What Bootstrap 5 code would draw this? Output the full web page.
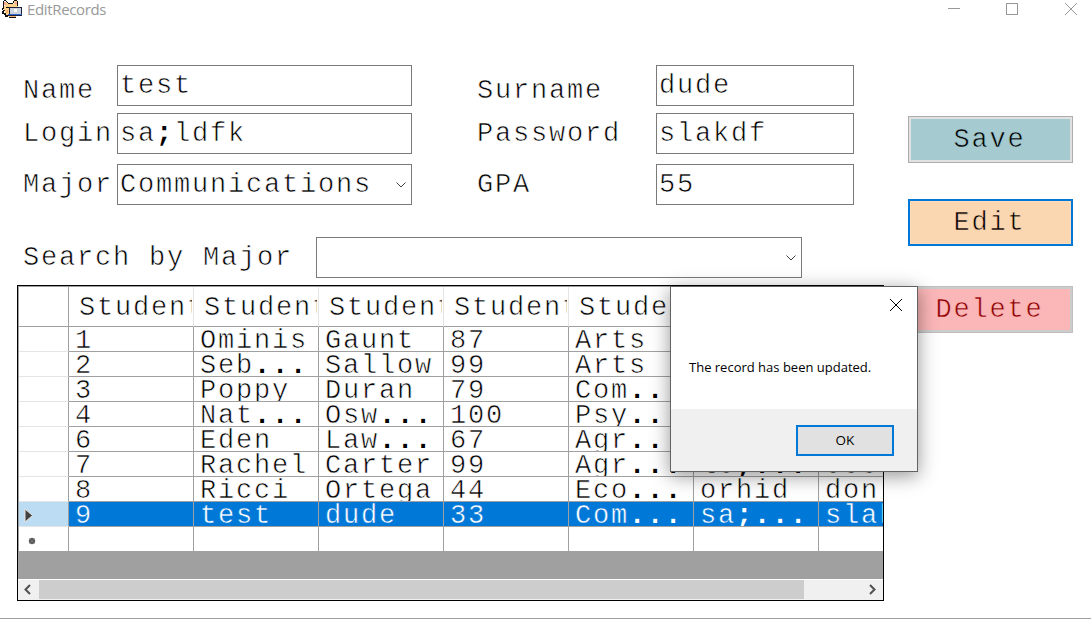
<!DOCTYPE html>
<html lang="en">
<head>
<meta charset="utf-8">
<title>EditRecords</title>
<link href="https://cdn.jsdelivr.net/npm/bootstrap@5.3.0/dist/css/bootstrap.min.css" rel="stylesheet">
<style>
body{width:1091px;height:619px;overflow:hidden;background:#fff;color:#000;font-family:"Liberation Mono",monospace;font-size:27px;letter-spacing:1.8px;line-height:39px;border-bottom:1px solid #a0a0a0}
.workspace{-webkit-text-stroke:.6px #fff}
.workspace b{-webkit-text-stroke:0}
.titlebar{height:20px;font:15px/19px "Open Sans","Noto Sans",sans-serif;letter-spacing:-.35px;color:#999}
.titlebar svg{display:block}
.workspace{padding:45px 18px 0 17px;gap:24px}
.main-col{width:867px}
.fields{display:grid;grid-template-columns:94px 295px 65px 179px 198px;padding-left:6px;grid-template-rows:41px 41px 41px;row-gap:7px}
.fields .third{position:relative;top:3px}
.field{height:41px;border:1px solid #7a7a7a;padding:0 0 0 2px;background:#fff;line-height:41px;white-space:nowrap}
.pick span{padding-top:1px}
.lbl{padding-top:1px;line-height:41px;white-space:nowrap}
.low{padding-top:6px}
.search-row{height:41px;margin-top:35px;padding-left:6px}
.search-row .lbl{width:293px}
.search-row .field{width:486px}
.records{width:867px;height:316px;margin-top:7px;border:1px solid #000;background:#a0a0a0;overflow:hidden}
.records table{table-layout:fixed;width:926px;border-collapse:separate;border-spacing:0;border-top:1px solid #a0a0a0;border-left:1px solid #a0a0a0;background:#fff}
.records td,.records th{padding:0 0 0 6px;height:25px;border-right:1px solid #a0a0a0;border-bottom:1px solid #a0a0a0;font-weight:400;overflow:hidden}
.records th.corner,.records tbody th{padding:0;border-bottom-color:#e5e5e5}
.records th{height:40px}
.records thead th{border-right-color:#e5e5e5;padding-left:10px}
.records thead th.corner{border-right-color:#a0a0a0;border-bottom-color:#a0a0a0}
.records tbody th{height:25px}
.records tbody tr:last-child td,.records tbody tr:last-child th{border-bottom:0;height:24px}
.cell-text{display:block;height:23px;line-height:27px;overflow:hidden;white-space:nowrap}
.head-text{display:block;height:39px;line-height:43px;overflow:hidden;white-space:nowrap;margin-right:1px}
.chosen td{background:#0078d7;color:#fff;-webkit-text-stroke:.5px #0078d7}
.chosen th{background:#bcdcf4}
.records tbody th svg{display:block}
.hscroll{height:21px;background:#f0f0f0;border-top:1px solid #fff;margin-top:28px}
.hscroll .track{height:20px}
.thumb{width:765px;height:19px;background:#cdcdcd}
.actions{padding-top:51px;width:165px}
.act{height:47px;border-radius:0;padding:2px 2px 0 0;font:inherit;letter-spacing:inherit;line-height:43px;color:#000;background:#a5cad0;border:1px solid #adadad;box-shadow:inset 0 0 0 2px #e1e1e1;-webkit-text-stroke:.6px #a5cad0}
.act.edit{background:#fad7b1;border:2px solid #0078d7;box-shadow:inset 0 0 0 1px #fbdcbb;line-height:41px;margin-top:36px;-webkit-text-stroke-color:#fad7b1}
.act.del{background:#fbb6b8;color:#8b0000;border-color:#bfbfbf;box-shadow:inset 0 0 0 2px #ccc;margin-top:40px;-webkit-text-stroke-color:#fbb6b8}
.msgbox{position:absolute;left:670px;top:286px;width:248px;height:186px;border:1px solid #626262;background:#fff;box-shadow:0 4px 18px rgba(0,0,0,.42);font:13px/18px "Open Sans","Noto Sans",sans-serif;letter-spacing:0}
.msg-head{height:36px;padding:12px 15px 0 0}
.msg-body{height:86px;padding:35px 0 0 18px;white-space:nowrap}
.msg-foot{height:62px;background:#f0f0f0;padding:16px 23px 0 0}
.ok{width:98px;height:31px;border:2px solid #0078d7;border-radius:0;background:#e1e1e1;padding:0;font:13.5px/27px "Open Sans","Noto Sans",sans-serif;color:#000}
</style>
</head>
<body>
<header class="titlebar d-flex justify-content-between">
  <div class="d-flex">
    <svg width="27" height="20" shape-rendering="crispEdges"><path fill="#ffd08a" d="M5 2h3v2h6V1h3v4h1v10h-2v1H7v-1H5v-4H4V6h1z"/><path fill="#f7a79b" d="M4 2h2v3H4zM15 2h2v2h-2z"/><path fill="#111" d="M4 0h2v1H4zM6 1h1v1H6zM3 1h1v4H3zM7 2h1v1H7zM8 3h5v1H8zM13 1h1v2h-1zM14 0h3v1h-3zM17 1h1v5h-1zM3 5h1v4H3zM6 7h3v1H6zM2 8h1v2H2zM3 10h2v1H3zM2 11h2v3H2zM4 13h2v2H4zM5 15h3v2H5zM9 17h7v1H9z"/><path fill="#f2b368" d="M6 10h2v3H6zM9 16h7v1H9z"/><path fill="#1c2340" d="M9 7h13v8H9z"/><path fill="#ccd3e0" d="M10 8h11v6H10z"/><path fill="#fff" d="M14 9h3v3h-3z"/><path fill="#3467ce" d="M8 14h14v1H8z"/><path fill="#1c2340" d="M8 15h14v1H8z"/></svg>
    <span>EditRecords</span>
  </div>
  <svg width="143" height="20" fill="none" stroke="#999"><path d="M0 8.500h12M58.500 3.500h11v11h-11z" shape-rendering="crispEdges"/><path d="M117 3l12 12M129 3l-12 12"/></svg>
</header>
<div class="workspace d-flex">
  <main class="main-col">
    <div class="fields">
      <span class="lbl low">Name</span><div class="field">test</div><span></span><span class="lbl low">Surname</span><div class="field">dude</div>
      <span class="lbl">Login</span><div class="field">sa<b>;</b>ldfk</div><span></span><span class="lbl">Password</span><div class="field">slakdf</div>
      <span class="lbl third">Major</span><div class="field pick third d-flex justify-content-between align-items-center pe-1"><span>Communications</span><svg width="12" height="12" fill="none" stroke="#444"><path d="M1.500 3.500l4.500 4.500L10.500 3.500"/></svg></div><span></span><span class="lbl third">GPA</span><div class="field third">55</div>
    </div>
    <div class="search-row d-flex">
      <span class="lbl">Search by Major</span>
      <div class="field d-flex justify-content-end align-items-center pe-1"><svg width="12" height="12" fill="none" stroke="#444"><path d="M1.500 3.500l4.500 4.500L10.500 3.500"/></svg></div>
    </div>
    <div class="records">
      <table>
        <colgroup><col style="width:50px"><col span="7" style="width:125px"></colgroup>
        <thead><tr><th class="corner"></th><th><span class="head-text">Student</span></th><th><span class="head-text">Student</span></th><th><span class="head-text">Student</span></th><th><span class="head-text">Student</span></th><th><span class="head-text">Stude</span></th><th></th><th></th></tr></thead>
        <tbody>
          <tr><th></th><td><span class="cell-text">1</span></td><td><span class="cell-text">Ominis</span></td><td><span class="cell-text">Gaunt</span></td><td><span class="cell-text">87</span></td><td><span class="cell-text">Arts</span></td><td></td><td></td></tr>
          <tr><th></th><td><span class="cell-text">2</span></td><td><span class="cell-text">Seb<b>...</b></span></td><td><span class="cell-text">Sallow</span></td><td><span class="cell-text">99</span></td><td><span class="cell-text">Arts</span></td><td></td><td></td></tr>
          <tr><th></th><td><span class="cell-text">3</span></td><td><span class="cell-text">Poppy</span></td><td><span class="cell-text">Duran</span></td><td><span class="cell-text">79</span></td><td><span class="cell-text">Com<b>...</b></span></td><td></td><td></td></tr>
          <tr><th></th><td><span class="cell-text">4</span></td><td><span class="cell-text">Nat<b>...</b></span></td><td><span class="cell-text">Osw<b>...</b></span></td><td><span class="cell-text">100</span></td><td><span class="cell-text">Psy<b>...</b></span></td><td></td><td></td></tr>
          <tr><th></th><td><span class="cell-text">6</span></td><td><span class="cell-text">Eden</span></td><td><span class="cell-text">Law<b>...</b></span></td><td><span class="cell-text">67</span></td><td><span class="cell-text">Agr<b>...</b></span></td><td></td><td></td></tr>
          <tr><th></th><td><span class="cell-text">7</span></td><td><span class="cell-text">Rachel</span></td><td><span class="cell-text">Carter</span></td><td><span class="cell-text">99</span></td><td><span class="cell-text">Agr<b>...</b></span></td><td><span class="cell-text">lo<b>;...</b></span></td><td><span class="cell-text">coo</span></td></tr>
          <tr><th></th><td><span class="cell-text">8</span></td><td><span class="cell-text">Ricci</span></td><td><span class="cell-text">Ortega</span></td><td><span class="cell-text">44</span></td><td><span class="cell-text">Eco<b>...</b></span></td><td><span class="cell-text">orhid</span></td><td><span class="cell-text">don</span></td></tr>
          <tr class="chosen"><th><svg width="24" height="24"><path d="M6 7v13l7.500-6.500z" fill="#404040" stroke="#e8e0da"/></svg></th><td><span class="cell-text">9</span></td><td><span class="cell-text">test</span></td><td><span class="cell-text">dude</span></td><td><span class="cell-text">33</span></td><td><span class="cell-text">Com<b>...</b></span></td><td><span class="cell-text">sa<b>;...</b></span></td><td><span class="cell-text">slak</span></td></tr>
          <tr><th><svg width="24" height="24"><circle cx="13" cy="14" r="3" fill="#404040"/><path d="M9.500 14h7M13 10.500v7M10.500 11.500l5 5M15.500 11.500l-5 5" stroke="#777" stroke-width=".8"/></svg></th><td></td><td></td><td></td><td></td><td></td><td></td><td></td></tr>
        </tbody>
      </table>
      <div class="hscroll"><div class="track d-flex">
        <svg width="21" height="19" fill="none" stroke="#505050" stroke-width="2"><path d="M12 5L7.500 9.500 12 14"/></svg>
        <div class="thumb"></div>
        <svg class="ms-auto" width="21" height="19" fill="none" stroke="#505050" stroke-width="2"><path d="M8 5l4.500 4.500L8 14"/></svg>
      </div></div>
    </div>
  </main>
  <aside class="actions d-flex flex-column">
    <button class="btn act">Save</button>
    <button class="btn act edit">Edit</button>
    <button class="btn act del">Delete</button>
  </aside>
</div>
<div class="msgbox" role="dialog">
  <div class="msg-head d-flex justify-content-end"><svg width="12" height="12" stroke="#000"><path d="M0 0l12 12M12 0L0 12"/></svg></div>
  <div class="msg-body">The record has been updated.</div>
  <div class="msg-foot d-flex justify-content-end"><button class="btn ok">OK</button></div>
</div>
<script src="https://cdn.jsdelivr.net/npm/bootstrap@5.3.0/dist/js/bootstrap.bundle.min.js"></script>
</body>
</html>
